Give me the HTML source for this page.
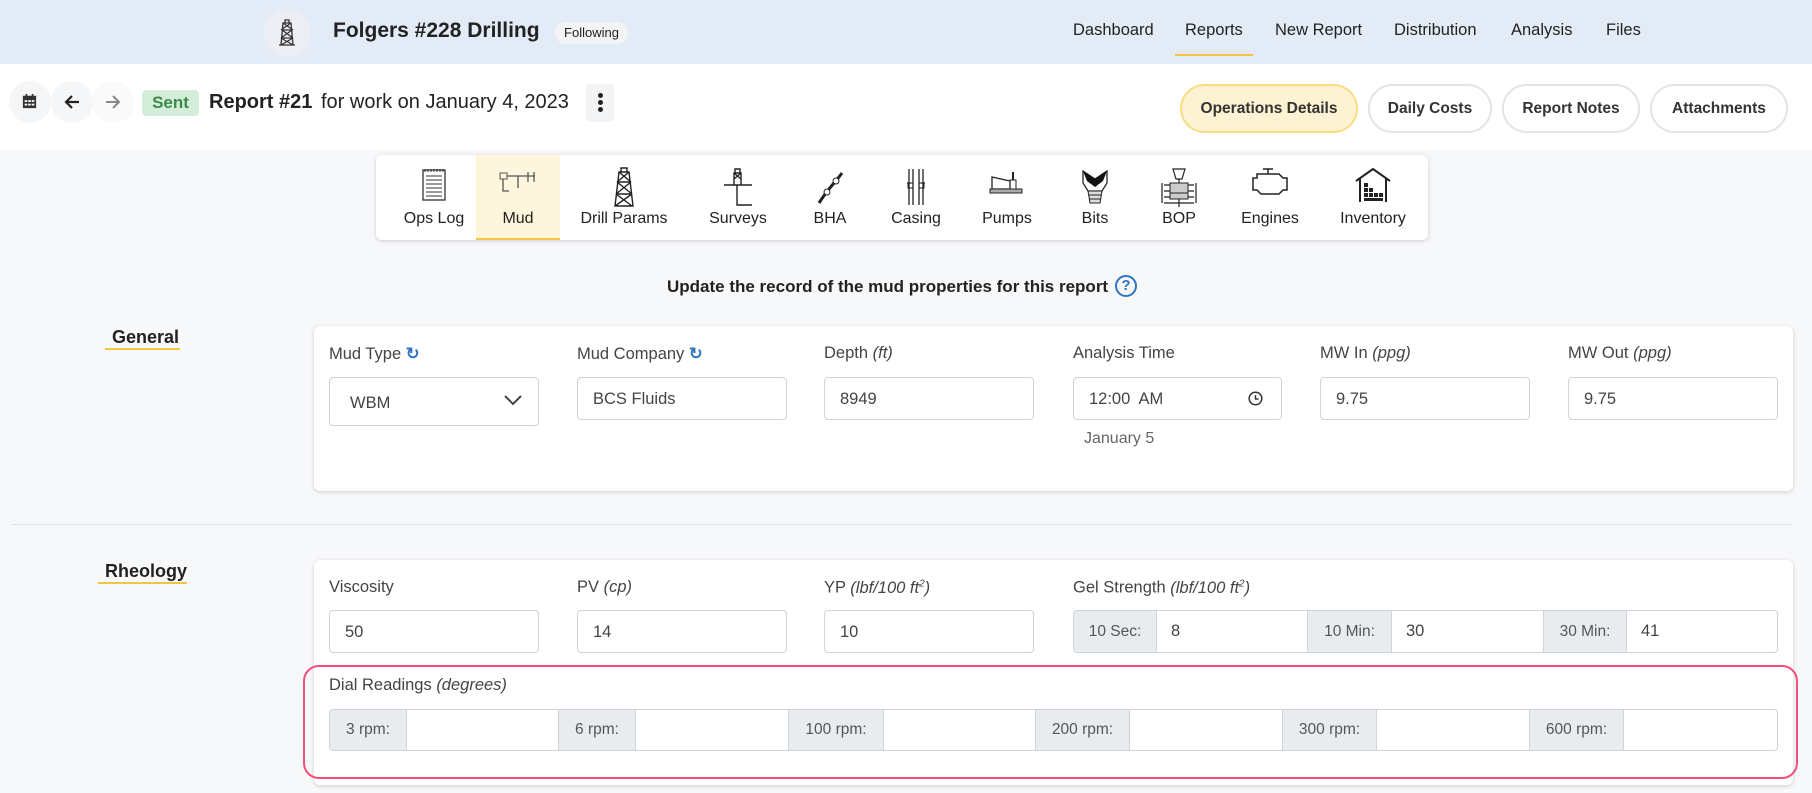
<!DOCTYPE html>
<html><head><meta charset="utf-8"><style>
*{box-sizing:border-box;margin:0;padding:0}
body{width:1812px;height:793px;overflow:hidden;background:#f7f8fa;font-family:"Liberation Sans",sans-serif;color:#212529;position:relative}
.a{position:absolute}
.hdr{left:0;top:0;width:1812px;height:64px;background:#e3ecf6}
.row2{left:0;top:64px;width:1812px;height:86px;background:#fff}
.nav{top:21px;font-size:16.5px;color:#222}
.circ{border-radius:50%;background:#f5f6f7}
.pbtn{top:84px;height:49px;border-radius:25px;border:2px solid #e3e4e6;background:#fff;font-size:15.5px;font-weight:bold;color:#333;display:flex;align-items:center;justify-content:center}
.card{background:#fff;border-radius:6px;box-shadow:0 1px 4px rgba(0,0,0,.18)}
.tab{top:155px;height:85px;text-align:center;font-size:16px;color:#222}
.tab span{position:absolute;left:0;right:0;top:55px}
.tab svg{position:absolute;left:50%;top:12px;transform:translateX(-50%)}
.lbl{font-size:16.5px;color:#444}
.lbl i{font-style:italic}
.inp{height:43px;border:1px solid #ced4da;border-radius:4px;background:#fff;font-size:16.5px;color:#444;padding:12px 15px}
.grp{display:flex;height:42px;border:1px solid #ced4da;border-radius:4px;overflow:hidden;background:#fff}
.ad{background:#e9ecef;color:#555;font-size:15.5px;display:flex;align-items:center;justify-content:center;border-right:1px solid #ced4da}
.gi{border-right:1px solid #ced4da;font-size:16.5px;color:#444;padding:11px 14px}
.gi:last-child{border-right:none}
.sec{font-size:18px;font-weight:bold;color:#222}
.ul{height:2px;background:#f5c542}
</style></head><body>
<div class="a hdr"></div>
<div class="a circ" style="left:264px;top:9px;width:47px;height:47px;background:#eceef4"></div>
<svg class="a" style="left:278px;top:19px" width="18" height="28" viewBox="0 0 18 28"><path d="M7 1h4v3H7zM5 4h8l2 22H3z M5 4l10 7M13 4L3 11M4 11h10M4 11l11 8M14 11L3 19M3 19h12M3 19l12 7M15 19L3 26M1 26h16" fill="none" stroke="#333" stroke-width="1.3"/></svg>
<div class="a" style="left:333px;top:19px;font-size:21px;font-weight:bold;color:#222">Folgers #228 Drilling</div>
<div class="a" style="left:555px;top:22px;width:73px;height:22px;border-radius:11px;background:#f3f4f6;font-size:13px;text-align:center;line-height:22px;color:#222">Following</div>
<div class="a nav" style="left:1073px">Dashboard</div>
<div class="a nav" style="left:1185px">Reports</div>
<div class="a" style="left:1175px;top:54px;width:78px;height:2px;background:#f5c542"></div>
<div class="a nav" style="left:1275px">New Report</div>
<div class="a nav" style="left:1394px">Distribution</div>
<div class="a nav" style="left:1511px">Analysis</div>
<div class="a nav" style="left:1606px">Files</div>

<div class="a row2"></div>
<div class="a circ" style="left:9px;top:81px;width:42px;height:42px"></div>
<svg class="a" style="left:22px;top:94px" width="15" height="15" viewBox="0 0 17 17"><rect x="1" y="2" width="15" height="14" fill="#333"/><g fill="#fff"><rect x="3" y="7" width="3" height="2"/><rect x="7" y="7" width="3" height="2"/><rect x="11" y="7" width="3" height="2"/><rect x="3" y="11" width="3" height="2"/><rect x="7" y="11" width="3" height="2"/><rect x="11" y="11" width="3" height="2"/></g><rect x="4" y="0" width="2" height="3" fill="#333"/><rect x="11" y="0" width="2" height="3" fill="#333"/></svg>
<div class="a circ" style="left:51px;top:81px;width:42px;height:42px"></div>
<svg class="a" style="left:63px;top:93px" width="18" height="18" viewBox="0 0 18 18"><path d="M16 9H3M9 3L3 9l6 6" fill="none" stroke="#222" stroke-width="2.2"/></svg>
<div class="a circ" style="left:92px;top:81px;width:42px;height:42px;background:#fafafa"></div>
<svg class="a" style="left:104px;top:93px" width="18" height="18" viewBox="0 0 18 18"><path d="M2 9h13M9 3l6 6-6 6" fill="none" stroke="#888" stroke-width="2"/></svg>
<div class="a" style="left:142px;top:90px;width:57px;height:26px;background:#d4edda;border-radius:4px;color:#3c8a4a;font-weight:bold;font-size:17px;text-align:center;line-height:26px">Sent</div>
<div class="a" style="left:209px;top:91px;font-size:20px;font-weight:bold;color:#222">Report #21</div>
<div class="a" style="left:321px;top:91px;font-size:20px;color:#222">for work on January 4, 2023</div>
<div class="a" style="left:586px;top:84px;width:28px;height:38px;background:#f3f4f6;border-radius:4px"></div>
<div class="a" style="left:598px;top:93px;width:5px;height:5px;border-radius:50%;background:#222;box-shadow:0 7px 0 #222,0 14px 0 #222"></div>
<div class="a pbtn" style="left:1180px;width:178px;background:#fdf3d3;border-color:#fbdc83">Operations Details</div>
<div class="a pbtn" style="left:1368px;width:124px">Daily Costs</div>
<div class="a pbtn" style="left:1502px;width:138px">Report Notes</div>
<div class="a pbtn" style="left:1650px;width:138px">Attachments</div>

<div class="a card" style="left:376px;top:155px;width:1052px;height:85px"></div>
<div class="a" style="left:476px;top:155px;width:84px;height:85px;background:#fdf6dc"></div>
<div class="a" style="left:476px;top:238px;width:84px;height:2px;background:#f5c542"></div>
<div class="a tab" style="left:394px;width:80px"><svg width="26" height="34" viewBox="0 0 26 34"><rect x="2" y="3" width="22" height="30" fill="#fff" stroke="#333" stroke-width="1.3"/><path d="M5 9h16M5 13h16M5 17h16M5 21h16M5 25h16M5 29h16M4 2v3M7 2v3M10 2v3M13 2v3M16 2v3M19 2v3M22 2v3" stroke="#333"/></svg><span>Ops Log</span></div>
<div class="a tab" style="left:476px;width:84px"><svg width="40" height="30" viewBox="0 0 40 30"><rect x="2" y="6" width="7" height="6" fill="none" stroke="#555"/><path d="M5 12v12h6M9 9h28M30 5v10M36 5v10M20 9v12" fill="none" stroke="#555" stroke-width="1.3"/></svg><span>Mud</span></div>
<div class="a tab" style="left:574px;width:100px"><svg width="22" height="40" viewBox="0 0 22 40"><path d="M8 1h6v4H8zM6 5h10l4 34H2zM6 5l12 10M16 5L4 15M4 15h14M4 15l15 12M18 15L3 27M3 27h16M3 27l16 12M19 27L2 39" fill="none" stroke="#222" stroke-width="1.4"/></svg><span>Drill Params</span></div>
<div class="a tab" style="left:698px;width:80px"><svg width="30" height="40" viewBox="0 0 30 40"><path d="M12 2h5v4h-5zM11 6h7v12h-7zM11 6l7 6M18 6l-7 6M1 18h28M14 18v20h15" fill="none" stroke="#222" stroke-width="1.4"/></svg><span>Surveys</span></div>
<div class="a tab" style="left:800px;width:60px"><svg width="30" height="40" viewBox="0 0 30 40"><path d="M4 36l4-6M8 30l6-8M14 22l5-6M19 16l5-6M24 10l3-4" stroke="#222" stroke-width="3"/><circle cx="12" cy="25" r="3" fill="#fff" stroke="#222"/><circle cx="21" cy="14" r="3" fill="#fff" stroke="#222"/></svg><span>BHA</span></div>
<div class="a tab" style="left:881px;width:70px"><svg width="24" height="40" viewBox="0 0 24 40"><path d="M5 2v36M9 2v36M15 2v36M19 2v36M3 16h4M17 16h4" fill="none" stroke="#222" stroke-width="1.3"/><rect x="4" y="16" width="5" height="5" fill="none" stroke="#222"/><rect x="15" y="16" width="5" height="5" fill="none" stroke="#222"/></svg><span>Casing</span></div>
<div class="a tab" style="left:972px;width:70px"><svg width="36" height="30" viewBox="0 0 36 30"><path d="M3 10l18 4v8H3z" fill="#fff" stroke="#222" stroke-width="1.3"/><rect x="1" y="22" width="32" height="4" fill="#aaa" stroke="#222"/><rect x="21" y="13" width="6" height="9" fill="none" stroke="#222"/><path d="M24 5v8" stroke="#222" stroke-width="2"/></svg><span>Pumps</span></div>
<div class="a tab" style="left:1060px;width:70px"><svg width="30" height="40" viewBox="0 0 30 40"><path d="M3 4l12 8 12-8v12l-5 8H8L3 16z" fill="#fff" stroke="#222" stroke-width="1.3"/><path d="M3 4l12 8 12-8-4 10-8 6-8-6z" fill="#111"/><path d="M8 24h14l-2 12h-10z" fill="#ddd" stroke="#222"/><path d="M9 28h12M9 32h12" stroke="#222"/></svg><span>Bits</span></div>
<div class="a tab" style="left:1144px;width:70px"><svg width="40" height="42" viewBox="0 0 40 42"><path d="M14 2h12l-3 10h-6zM20 12v28M3 16v20M37 16v20M5 18h30M5 24h30M5 30h30M5 36h30" fill="none" stroke="#222" stroke-width="1.2"/><rect x="11" y="16" width="18" height="10" fill="#ccc" stroke="#222"/><rect x="11" y="26" width="18" height="6" fill="#ccc" stroke="#222"/></svg><span>BOP</span></div>
<div class="a tab" style="left:1230px;width:80px"><svg width="38" height="32" viewBox="0 0 38 32"><path d="M12 2h10M17 2v5M6 7h22l4 4h4v12h-4l-4 4H10l-4-4H2V11h4z" fill="none" stroke="#222" stroke-width="1.5"/></svg><span>Engines</span></div>
<div class="a tab" style="left:1328px;width:90px"><svg width="38" height="36" viewBox="0 0 38 36"><path d="M2 14L19 2l17 12M6 11v24M32 11v24" fill="none" stroke="#222" stroke-width="2"/><g fill="#222"><rect x="10" y="16" width="4" height="4"/><rect x="10" y="21" width="4" height="4"/><rect x="15" y="21" width="4" height="4"/><rect x="10" y="26" width="4" height="4"/><rect x="15" y="26" width="4" height="4"/><rect x="20" y="26" width="4" height="4"/><rect x="25" y="26" width="4" height="4"/><rect x="10" y="31" width="19" height="3"/></g></svg><span>Inventory</span></div>

<div class="a" style="left:667px;top:277px;font-size:17px;font-weight:bold;color:#222">Update the record of the mud properties for this report</div>
<div class="a" style="left:1115px;top:275px;width:22px;height:22px;border-radius:50%;border:2px solid #2f74c0;color:#2f74c0;font-size:15px;font-weight:bold;text-align:center;line-height:18px">?</div>

<div class="a sec" style="left:112px;top:327px">General</div>
<div class="a ul" style="left:105px;top:348px;width:75px"></div>
<div class="a card" style="left:314px;top:326px;width:1479px;height:165px"></div>
<div class="a lbl" style="left:329px;top:344px">Mud Type <b style="color:#2f74c0">&#x21bb;</b></div>
<div class="a lbl" style="left:577px;top:344px">Mud Company <b style="color:#2f74c0">&#x21bb;</b></div>
<div class="a lbl" style="left:824px;top:344px">Depth <i>(ft)</i></div>
<div class="a lbl" style="left:1073px;top:344px">Analysis Time</div>
<div class="a lbl" style="left:1320px;top:344px">MW In <i>(ppg)</i></div>
<div class="a lbl" style="left:1568px;top:344px">MW Out <i>(ppg)</i></div>
<div class="a inp" style="left:329px;top:377px;width:210px;height:49px;padding:16px 20px">WBM</div>
<svg class="a" style="left:504px;top:395px" width="18" height="11" viewBox="0 0 18 11"><path d="M1 1l8 8 8-8" fill="none" stroke="#444" stroke-width="2"/></svg>
<div class="a inp" style="left:577px;top:377px;width:210px">BCS Fluids</div>
<div class="a inp" style="left:824px;top:377px;width:210px">8949</div>
<div class="a inp" style="left:1073px;top:377px;width:209px">12:00&nbsp; AM</div>
<svg class="a" style="left:1248px;top:391px" width="15" height="15" viewBox="0 0 15 15"><circle cx="7.5" cy="7.5" r="6.3" fill="none" stroke="#333" stroke-width="1.5"/><path d="M7.5 4v4h3" fill="none" stroke="#333" stroke-width="1.4"/></svg>
<div class="a" style="left:1084px;top:430px;font-size:16px;color:#666">January 5</div>
<div class="a inp" style="left:1320px;top:377px;width:210px">9.75</div>
<div class="a inp" style="left:1568px;top:377px;width:210px">9.75</div>

<div class="a" style="left:12px;top:524px;width:1781px;height:1px;background:#dde0e4"></div>

<div class="a sec" style="left:105px;top:561px">Rheology</div>
<div class="a ul" style="left:98px;top:582px;width:89px"></div>
<div class="a card" style="left:314px;top:560px;width:1479px;height:225px"></div>
<div class="a lbl" style="left:329px;top:578px">Viscosity</div>
<div class="a lbl" style="left:577px;top:578px">PV <i>(cp)</i></div>
<div class="a lbl" style="left:824px;top:578px">YP <i>(lbf/100 ft<sup style="font-size:10px">2</sup>)</i></div>
<div class="a lbl" style="left:1073px;top:578px">Gel Strength <i>(lbf/100 ft<sup style="font-size:10px">2</sup>)</i></div>
<div class="a inp" style="left:329px;top:610px;width:210px">50</div>
<div class="a inp" style="left:577px;top:610px;width:210px">14</div>
<div class="a inp" style="left:824px;top:610px;width:210px">10</div>
<div class="a grp" style="left:1073px;top:610px;width:705px;height:43px">
<div class="ad" style="width:83px">10 Sec:</div><div class="gi" style="width:151px">8</div>
<div class="ad" style="width:84px">10 Min:</div><div class="gi" style="width:152px">30</div>
<div class="ad" style="width:83px">30 Min:</div><div class="gi" style="flex:1">41</div></div>

<div class="a" style="left:303px;top:665px;width:1495px;height:114px;border:2.5px solid #f0507a;border-radius:16px"></div>
<div class="a lbl" style="left:329px;top:676px">Dial Readings <i>(degrees)</i></div>
<div class="a grp" style="left:329px;top:709px;width:1449px">
<div class="ad" style="width:77px">3 rpm:</div><div class="gi" style="width:152px"></div>
<div class="ad" style="width:77px">6 rpm:</div><div class="gi" style="width:153px"></div>
<div class="ad" style="width:95px">100 rpm:</div><div class="gi" style="width:152px"></div>
<div class="ad" style="width:94px">200 rpm:</div><div class="gi" style="width:153px"></div>
<div class="ad" style="width:94px">300 rpm:</div><div class="gi" style="width:153px"></div>
<div class="ad" style="width:94px">600 rpm:</div><div class="gi" style="flex:1"></div></div>
</body></html>
